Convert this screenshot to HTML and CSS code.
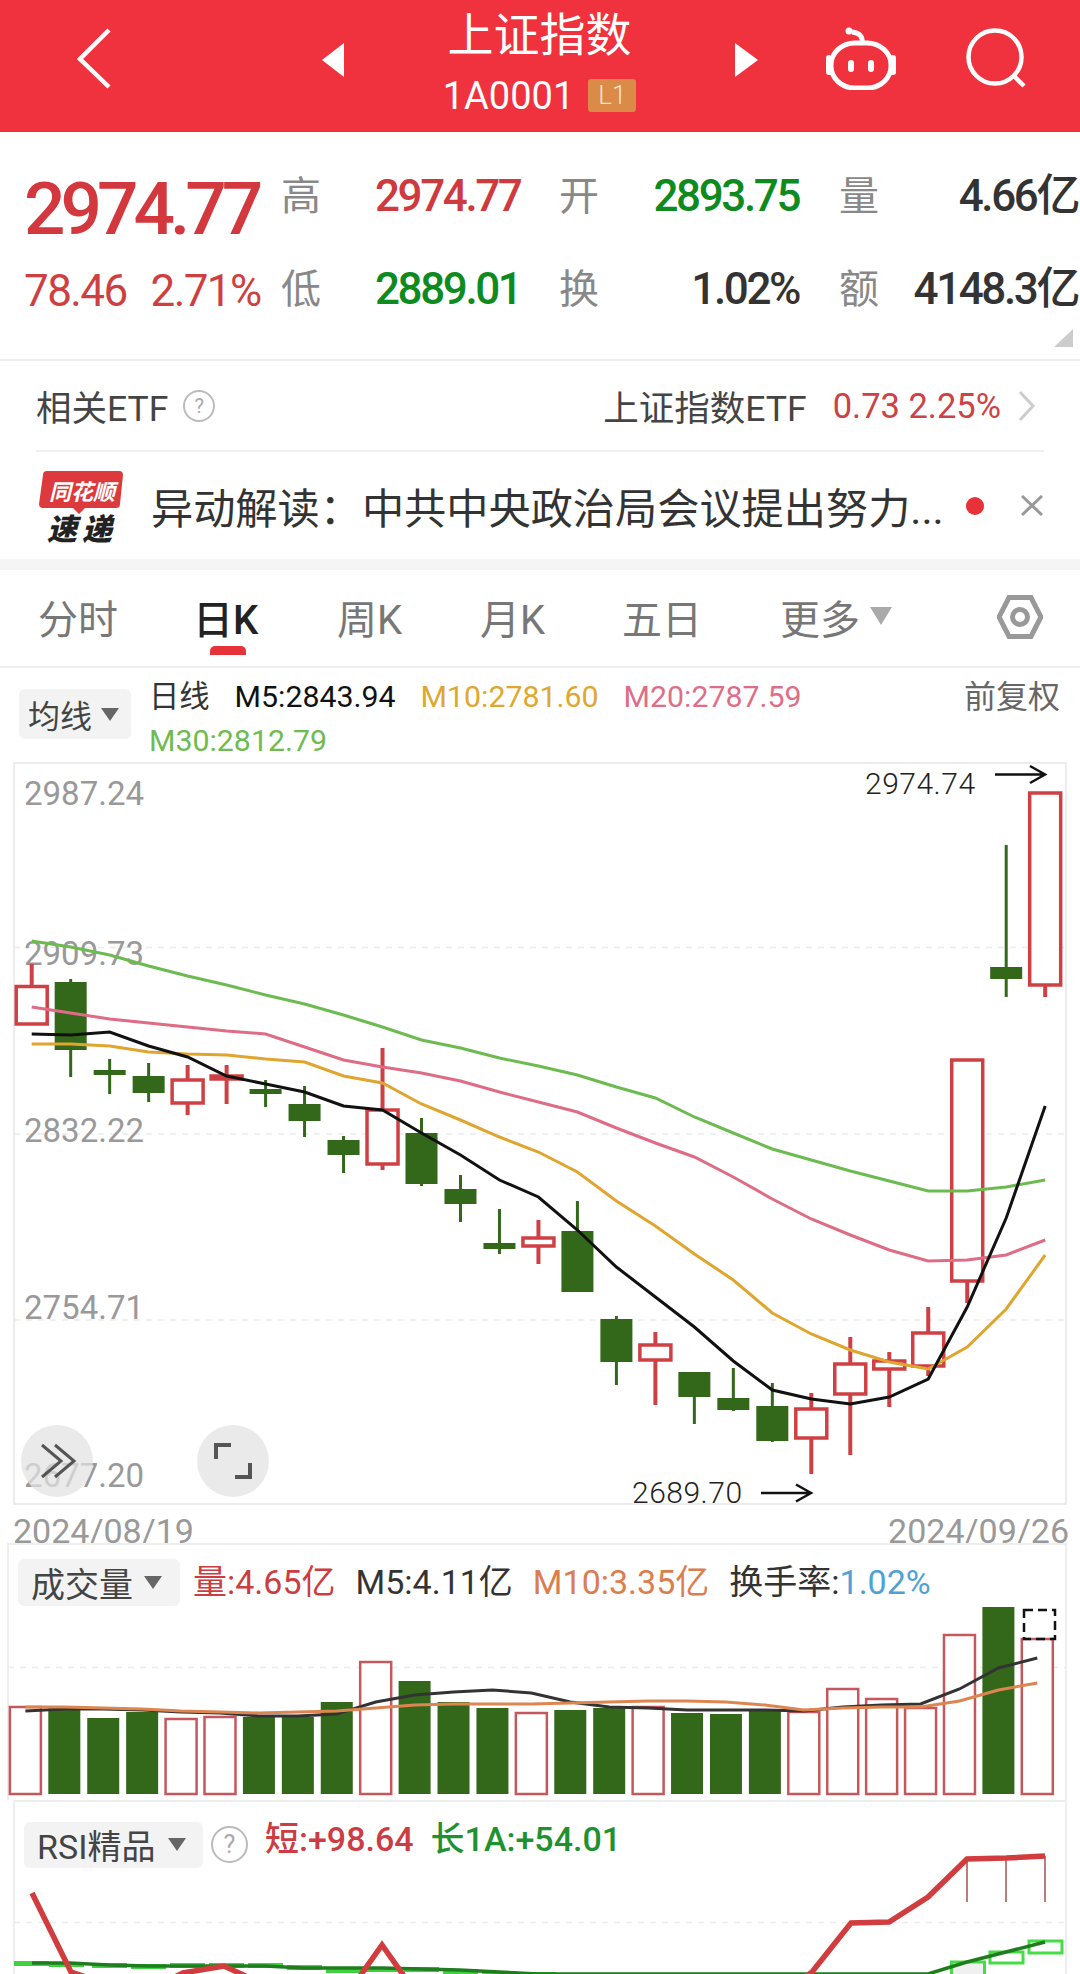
FILE: index.html
```html
<!DOCTYPE html>
<html lang="zh-CN">
<head>
    <meta charset="UTF-8">
    <meta name="viewport" content="width=device-width, initial-scale=1.0">
    <title>上证指数</title>
    <link rel="stylesheet" href="styles.css">
</head>
<body>
    <header class="topbar">
        <svg class="icon-back" viewBox="0 0 36 61"><path d="M33 2 L4 31 L33 59"/></svg>
        <span class="tri tri-left"></span>
        <div class="topbar-title">
            <h1 class="stock-name">上证指数</h1>
            <div class="stock-code">1A0001<span class="level-badge">L1</span></div>
        </div>
        <span class="tri tri-right"></span>
        <svg class="icon-robot" viewBox="826 27 70 63">
            <path d="M862 43 C863 37 860 33 852 32"/>
            <circle cx="849" cy="31" r="3.5" class="solid"/>
            <rect x="831" y="43" width="60" height="45" rx="24" ry="22"/>
            <path d="M829 58 V72 M893 58 V72" class="ears"/>
            <rect x="848" y="60" width="6" height="12" rx="3" class="solid"/>
            <rect x="868" y="60" width="6" height="12" rx="3" class="solid"/>
        </svg>
        <svg class="icon-search" viewBox="966 29 60 60">
            <circle cx="995" cy="58" r="26.5"/>
            <path d="M1015 78 L1024 87"/>
        </svg>
    </header>

    <section class="quote">
        <div class="price-big">2974.77</div>
        <div class="q-label q-c2">高</div>
        <div class="q-val up q-c3">2974.77</div>
        <div class="q-label q-c4">开</div>
        <div class="q-val down q-c5 q-right">2893.75</div>
        <div class="q-label q-c7">量</div>
        <div class="q-val flat q-c8 q-right">4.66亿</div>

        <div class="price-change"><span>78.46</span><span>2.71%</span></div>
        <div class="q-label q-c2">低</div>
        <div class="q-val down q-c3">2889.01</div>
        <div class="q-label q-c4">换</div>
        <div class="q-val flat q-c5 q-right">1.02%</div>
        <div class="q-label q-c7">额</div>
        <div class="q-val flat q-c8 q-right">4148.3亿</div>
        <span class="corner"></span>
    </section>

    <section class="etf-row">
        <div class="etf-left">相关ETF<span class="help help-small">?</span></div>
        <div class="etf-right">上证指数ETF<span class="etf-num">0.73 2.25%</span>
            <svg class="icon-more" viewBox="0 0 18 30"><path d="M2 1 L15 15 L2 29"/></svg>
        </div>
    </section>

    <section class="news-row">
        <svg class="news-logo" viewBox="36 466 92 76">
            <path class="bubble" d="M47 469 H119 Q123 469 123 473 L120 502 Q120 506 116 506 H85 L79 512 L73 506 H43 Q39 506 39 502 L43 473 Q43 469 47 469 Z"/>
            <text class="logo-top" x="49" y="498">同花顺</text>
            <text class="logo-bottom" x="47" y="538">速递</text>
        </svg>
        <div class="news-text">异动解读：中共中央政治局会议提出努力...</div>
        <span class="news-dot"></span>
        <svg class="icon-close" viewBox="0 0 22 21"><path d="M1 1 L21 20 M21 1 L1 20"/></svg>
    </section>

    <div class="gap-band"></div>

    <nav class="tabs">
        <span class="tab">分时</span>
        <span class="tab tab-active">日K</span>
        <span class="tab">周K</span>
        <span class="tab">月K</span>
        <span class="tab">五日</span>
        <span class="tab">更多<i class="caret caret-more"></i></span>
        <svg class="icon-hex" viewBox="997 597 46 44">
            <path d="M1009 599.5 H1031 L1041 619 L1031 638.5 H1009 L999 619 Z"/>
            <circle cx="1020" cy="619" r="7.5"/>
        </svg>
    </nav>

    <section class="legend">
        <div class="select select-ma">均线<i class="caret"></i></div>
        <div class="legend-lines">
            <div class="legend-line">
                <span class="c-dark">日线</span>
                <span class="c-black">M5:2843.94</span>
                <span class="c-m10">M10:2781.60</span>
                <span class="c-m20">M20:2787.59</span>
            </div>
            <div class="legend-line"><span class="c-m30">M30:2812.79</span></div>
        </div>
        <div class="adjust">前复权</div>
    </section>

    <section class="kline">
        <svg class="chart-svg" viewBox="13 762 1054 743">
            <g class="grid">
                <path d="M14 947.5 H1066 M14 1134 H1066 M14 1320 H1066"/>
            </g>
            <text class="axis" x="24" y="805">2987.24</text>
            <text class="axis" x="24" y="965">2909.73</text>
            <text class="axis" x="24" y="1142">2832.22</text>
            <text class="axis" x="24" y="1319">2754.71</text>
            <text class="axis" x="24" y="1487">2677.20</text>
            <g id="candles"></g>
            <g id="ma-lines"></g>
            <text class="extreme" x="865" y="794">2974.74</text>
            <path class="arrow" d="M995 774.5 H1045 M1030 766 L1045 774.5 L1030 783"/>
            <text class="extreme" x="632" y="1503">2689.70</text>
            <path class="arrow" d="M761 1493 H811 M796 1484.5 L811 1493 L796 1501.5"/>
            <circle class="float-btn" cx="57" cy="1461" r="36"/>
            <path class="float-icon" d="M42 1445 L61 1461 L42 1477 M55 1445 L74 1461 L55 1477"/>
            <circle class="float-btn" cx="233" cy="1461" r="36"/>
            <path class="float-icon thick" d="M216 1459 V1445 H231 M250 1463 V1477 H235"/>
        </svg>
    </section>

    <div class="dates"><span>2024/08/19</span><span>2024/09/26</span></div>

    <section class="panel panel-vol">
        <svg class="chart-svg" viewBox="7 1543 1060 257">
            <path class="grid" d="M8 1667.5 H1066"/>
            <g id="vol-bars"></g>
            <g id="vol-lines"></g>
        </svg>
        <div class="panel-head">
            <div class="select select-vol">成交量<i class="caret"></i></div>
            <span class="c-red">量:4.65亿</span>
            <span class="c-dark">M5:4.11亿</span>
            <span class="c-orange">M10:3.35亿</span>
            <span class="c-dark">换手率:<b class="c-blue">1.02%</b></span>
        </div>
    </section>

    <section class="panel panel-rsi">
        <svg class="chart-svg" viewBox="13 1800 1054 174">
            <path class="grid" d="M14 1922.5 H1066"/>
            <g id="rsi"></g>
        </svg>
        <div class="panel-head">
            <div class="select select-rsi">RSI精品<i class="caret"></i></div>
            <span class="help help-big">?</span>
            <span class="c-red strong">短:+98.64</span>
            <span class="c-green strong">长1A:+54.01</span>
        </div>
    </section>

    <script src="chart.js"></script>
</body>
</html>
```

FILE: styles.css
```css
* {
    box-sizing: border-box;
}

html, body {
    margin: 0;
    padding: 0;
}

body {
    width: 1080px;
    height: 1974px;
    overflow: hidden;
    background-color: white;
    font-family: Roboto, "Noto Sans CJK SC", sans-serif;
    color: #333;
}

/* top red bar */
.topbar {
    display: flex;
    align-items: center;
    height: 132px;
    padding: 0 0 16px 76px;
    background-color: #ef323d;
    color: white;
}

.icon-back {
    width: 36px;
    height: 61px;
    fill: none;
    stroke: #fff;
    stroke-width: 4.5;
}

.tri {
    width: 0;
    height: 0;
    margin-top: 4px;
    border-top: 17px solid transparent;
    border-bottom: 17px solid transparent;
}

.tri-left {
    margin-left: 210px;
    border-right: 22px solid white;
}

.tri-right {
    border-left: 23px solid white;
}

.topbar-title {
    width: 391px;
    padding-top: 9px;
    text-align: center;
}

.stock-name {
    margin: 0;
    font-size: 46px;
    line-height: 50px;
    font-weight: 400;
}

.stock-code {
    margin-top: 16px;
    display: flex;
    justify-content: center;
    align-items: center;
    font-size: 38px;
    line-height: 40px;
}

.level-badge {
    width: 48px;
    height: 33px;
    margin-left: 14px;
    border-radius: 3px;
    background-color: #dc8a48;
    color: #f8e4cf;
    font-size: 26px;
    line-height: 33px;
    font-weight: 300;
}

.icon-robot {
    width: 70px;
    height: 63px;
    margin-left: 68px;
    fill: none;
    stroke: #fff;
    stroke-width: 5;
}

.icon-robot .solid {
    fill: #fff;
    stroke: none;
}

.icon-robot .ears {
    stroke-width: 6;
    stroke-linecap: round;
}

.icon-search {
    width: 60px;
    height: 60px;
    margin-left: 70px;
    fill: none;
    stroke: #fff;
    stroke-width: 4.5;
}

/* quote block */
.quote {
    position: relative;
    display: grid;
    grid-template-columns: 257px 94px 184px 40px 200px 40px 40px 199px;
    grid-template-rows: 93px 93px;
    height: 229px;
    padding: 18px 0 0 24px;
    border-bottom: 2px solid #eee;
}

.price-big {
    margin-top: 19px;
    font-size: 73px;
    line-height: 80px;
    font-weight: 500;
    letter-spacing: -5px;
    color: #d2383e;
}

.price-change {
    display: flex;
    gap: 24px;
    margin-top: 2px;
    font-size: 44px;
    line-height: 93px;
    letter-spacing: -1.6px;
    color: #cf3f42;
}

.q-label {
    font-size: 40px;
    line-height: 93px;
    color: #888;
}

.q-val {
    font-size: 44px;
    line-height: 93px;
    font-weight: 500;
    letter-spacing: -2.4px;
}

.q-right {
    text-align: right;
}

.q-c2 { grid-column: 2; }
.q-c3 { grid-column: 3; }
.q-c4 { grid-column: 4; }
.q-c5 { grid-column: 5; }
.q-c7 { grid-column: 7; }
.q-c8 { grid-column: 8; }

.up { color: #cf3a3f; }
.down { color: #0e8a1e; }
.flat { color: #333; }

.corner {
    position: absolute;
    right: 7px;
    top: 197px;
    border-left: 19px solid transparent;
    border-bottom: 18px solid #ccc;
}

/* related etf */
.etf-row {
    display: flex;
    justify-content: space-between;
    align-items: center;
    height: 91px;
    margin: 0 36px;
    border-bottom: 2px solid #f0f0f0;
    font-size: 35.5px;
    color: #444;
}

.etf-left, .etf-right {
    display: flex;
    align-items: center;
}

.help {
    display: inline-block;
    border: 2px solid #bbb;
    border-radius: 50%;
    color: #aaa;
    text-align: center;
}

.help-small {
    width: 32px;
    height: 32px;
    margin-left: 15px;
    font-size: 20px;
    line-height: 28px;
}

.etf-num {
    margin-left: 26px;
    font-size: 34.5px;
    color: #cc4246;
}

.icon-more {
    width: 18px;
    height: 30px;
    margin-left: 17px;
    margin-right: 8px;
    fill: none;
    stroke: #ccc;
    stroke-width: 3;
}

/* news line */
.news-row {
    display: flex;
    align-items: center;
    height: 107px;
    padding: 0 0 0 36px;
}

.news-logo {
    width: 92px;
    height: 76px;
    overflow: visible;
}

.bubble {
    fill: #dd3a3e;
}

.logo-top {
    font-size: 22px;
    font-weight: 700;
    font-style: italic;
    fill: white;
}

.logo-bottom {
    font-size: 30px;
    font-weight: 900;
    font-style: italic;
    letter-spacing: 5px;
    fill: #222;
}

.news-text {
    width: 800px;
    margin-left: 23px;
    font-size: 42.2px;
    color: #333;
    white-space: nowrap;
}

.news-dot {
    width: 18px;
    height: 18px;
    margin-left: 15px;
    border-radius: 50%;
    background-color: #e8323a;
}

.icon-close {
    width: 22px;
    height: 21px;
    margin-left: 37px;
    fill: none;
    stroke: #999;
    stroke-width: 3;
}

.gap-band {
    height: 11px;
    background-color: #f5f5f5;
}

/* period tabs */
.tabs {
    position: relative;
    display: grid;
    grid-template-columns: 160px 139px 143px 142px 158px 217px 46px;
    align-items: center;
    height: 98px;
    padding: 0 0 3px 38px;
    border-bottom: 2px solid #eee;
    font-size: 40px;
    color: #777;
}

.tab {
    display: flex;
    align-items: center;
    white-space: nowrap;
}

.tab-active {
    position: relative;
    margin-left: -5px;
    color: #222;
    font-weight: 500;
}

.tab-active::after {
    content: "";
    position: absolute;
    left: 17px;
    top: 58px;
    width: 36px;
    height: 9px;
    border-radius: 5px 5px 0 0;
    background-color: #e8323a;
}

.caret {
    display: inline-block;
    width: 0;
    height: 0;
    border-left: 9px solid transparent;
    border-right: 9px solid transparent;
    border-top: 13px solid #666;
}

.caret-more {
    margin-left: 10px;
    margin-top: -2px;
    border-left-width: 11px;
    border-right-width: 11px;
    border-top: 18px solid #aaa;
}

.icon-hex {
    width: 46px;
    height: 44px;
    fill: none;
    stroke: #999;
    stroke-width: 5;
}

/* ma legend */
.legend {
    display: flex;
    height: 94px;
    padding: 21px 20px 0 19px;
    font-size: 30.3px;
}

.select {
    display: flex;
    align-items: center;
    border-radius: 6px;
    background-color: #f3f3f3;
    color: #444;
}

.select-ma {
    width: 112px;
    height: 50px;
    padding-left: 9px;
    font-size: 32px;
}

.select-ma .caret {
    margin-left: 9px;
}

.legend-lines {
    margin-left: 18px;
    margin-top: -21px;
    flex: 1;
}

.legend-line {
    display: flex;
    gap: 25px;
    height: 44px;
    line-height: 58px;
}

.adjust {
    margin-top: -21px;
    font-size: 32px;
    line-height: 58px;
    color: #666;
}

.c-dark { color: #333; }
.c-black { color: #111; }
.c-m10 { color: #dfa72f; }
.c-m20 { color: #de6e88; }
.c-m30 { color: #6fbb50; }
.c-red { color: #cc3c42; }
.c-orange { color: #dc7d50; }
.c-blue { color: #4ea2d4; font-weight: 400; }
.c-green { color: #1f9130; }

/* charts */
.kline {
    position: relative;
    height: 743px;
    margin: 0 13px;
    border: 2px solid #ececec;
}

.chart-svg {
    position: absolute;
    left: -2px;
    top: -2px;
    overflow: visible;
}

.kline .chart-svg {
    width: 1054px;
    height: 743px;
}

.grid {
    fill: none;
    stroke: #ececec;
    stroke-width: 1.5;
    stroke-dasharray: 6 6;
}

.axis {
    font-size: 33px;
    fill: #999;
}

.extreme {
    font-size: 30px;
    font-weight: 300;
    letter-spacing: 0.5px;
    fill: #222;
}

.arrow {
    fill: none;
    stroke: #111;
    stroke-width: 2.5;
}

.float-btn {
    fill: rgba(226, 226, 226, 0.72);
}

.float-icon {
    fill: none;
    stroke: #555;
    stroke-width: 3;
}

.float-icon.thick {
    stroke-width: 4;
}

.dates {
    display: flex;
    justify-content: space-between;
    height: 38px;
    margin: 0 11px 0 13px;
    padding-top: 13px;
    font-size: 34px;
    line-height: 26px;
    color: #999;
}

.panel {
    position: relative;
    border: 2px solid #eee;
    border-bottom: none;
}

.panel-vol {
    height: 257px;
    margin: 0 13px 0 7px;
}

.panel-vol .chart-svg {
    width: 1060px;
    height: 257px;
}

.panel-rsi {
    height: 174px;
    margin: 0 13px;
}

.panel-rsi .chart-svg {
    width: 1054px;
    height: 174px;
}

.panel-head {
    position: relative;
    display: flex;
    align-items: center;
    gap: 20px;
    font-size: 34px;
    color: #333;
}

.panel-vol .panel-head {
    padding: 10px 0 0 9px;
}

.panel-vol .panel-head > span {
    margin-bottom: 5px;
}

.panel-vol .c-red {
    margin-left: -7px;
}

.panel-rsi .panel-head {
    padding: 10px 0 0 9px;
}

.select-vol {
    width: 162px;
    height: 47px;
    padding-left: 13px;
}

.select-rsi {
    width: 179px;
    height: 46px;
    padding-left: 13px;
}

.select-vol .caret, .select-rsi .caret {
    margin-left: 11px;
}

.select-rsi .caret {
    margin-left: 13px;
}

.help-big {
    width: 37px;
    height: 37px;
    margin-left: -12px;
    font-size: 25px;
    line-height: 33px;
}

.strong {
    font-weight: 500;
    margin-bottom: 16px;
}

.panel-head b {
    font-weight: 400;
}

.panel-rsi .c-red {
    margin-left: -3px;
}

.panel-rsi .c-green {
    margin-left: -3px;
}
```

FILE: chart.js
```js
// all coordinates are page pixels, the svg viewBoxes are set to match
const UP = "#cf4044";
const DOWN = "#33681a";

// up?, wick top, wick bottom, body top, body bottom
const candles = [
    [1, 964, 1024, 986.5, 1024], [0, 979, 1077, 982, 1050], [0, 1059, 1094, 1070, 1075],
    [0, 1063, 1102, 1076, 1093], [1, 1065, 1115, 1080, 1103], [1, 1065, 1104, 1076, 1079],
    [0, 1080, 1107, 1089, 1094], [0, 1086, 1137, 1104, 1121], [0, 1136, 1173, 1140, 1155],
    [1, 1048, 1170, 1110, 1164], [0, 1118, 1186, 1133, 1184], [0, 1175, 1222, 1189, 1204],
    [0, 1209, 1254, 1243, 1249], [1, 1220, 1264, 1238, 1246], [0, 1201, 1292, 1231, 1292],
    [0, 1316, 1385, 1319, 1362], [1, 1332, 1405, 1345, 1360], [0, 1372, 1424, 1372, 1397],
    [0, 1368, 1411, 1398, 1410], [0, 1383, 1442, 1406, 1441], [1, 1393, 1474, 1409, 1438],
    [1, 1337, 1455, 1364, 1394], [1, 1352, 1407, 1361, 1369], [1, 1307, 1376, 1333, 1366],
    [1, 1060, 1303, 1060, 1281], [0, 845, 997, 967, 979], [1, 793, 997, 793, 985]
];

const maLines = [
    { color: "#6dbb50", ys: [941, 947, 955, 966, 976, 985, 995, 1004, 1015, 1027, 1040, 1048, 1058, 1066, 1075, 1087, 1098, 1117, 1133, 1149, 1160, 1171, 1181, 1191, 1191, 1187, 1180] },
    { color: "#de6c85", ys: [1007, 1013, 1019, 1023, 1027, 1031, 1034, 1047, 1060, 1067, 1073, 1081, 1092, 1102, 1112, 1128, 1143, 1157, 1177, 1199, 1219, 1235, 1250, 1261, 1260, 1255, 1240] },
    { color: "#e0a52e", ys: [1044, 1044, 1046, 1052, 1054, 1055, 1059, 1062, 1076, 1083, 1104, 1120, 1137, 1152, 1172, 1201, 1226, 1254, 1280, 1313, 1334, 1350, 1362, 1369, 1347, 1309, 1255] },
    { color: "#111111", ys: [1034, 1035, 1032, 1046, 1057, 1076, 1084, 1092, 1106, 1110, 1133, 1155, 1180, 1197, 1230, 1267, 1297, 1327, 1361, 1390, 1399, 1404, 1397, 1379, 1307, 1218, 1106] }
];

// up?, bar top
const volBars = [
    [1, 1707], [0, 1707], [0, 1718], [0, 1712], [1, 1719], [1, 1717], [0, 1717], [0, 1717], [0, 1702],
    [1, 1662], [0, 1681], [0, 1702], [0, 1708], [1, 1713], [0, 1710], [0, 1708], [1, 1707], [0, 1713],
    [0, 1714], [0, 1711], [1, 1712], [1, 1689], [1, 1699], [1, 1708], [1, 1635], [0, 1607], [1, 1639]
];

const volM5 = [1711, 1709, 1709, 1710, 1712, 1713, 1716, 1716, 1714, 1702, 1695, 1692, 1690, 1693, 1702, 1707, 1708, 1710, 1710, 1710, 1711, 1707, 1705, 1704, 1689, 1668, 1658];
const volM10 = [1707, 1707, 1708, 1709, 1711, 1712, 1713, 1712, 1711, 1708, 1705, 1704, 1704, 1704, 1703, 1702, 1701, 1701, 1702, 1705, 1710, 1708, 1707, 1707, 1701, 1690, 1683];

const rsiRed = [[32, 1893], [71, 1972], [110, 1985], [148, 1990], [183, 1973], [224, 1966], [265, 1985], [304, 2000], [343, 2000], [382, 1945], [421, 2000], [772, 2000], [812, 1972], [851, 1923], [889, 1922], [928, 1897], [967, 1859], [1006, 1858], [1045, 1856]];
const rsiDark = [[32, 1963], [70, 1963], [109, 1965], [148, 1966], [187, 1966], [226, 1966], [265, 1966], [304, 1968], [343, 1968], [382, 1968], [421, 1969], [460, 1970], [499, 1972], [538, 1974], [928, 1974], [967, 1962], [1006, 1952], [1045, 1942]];
// left, top of the flat bright histogram blocks
const rsiBlocks = [[14, 1961], [49, 1962], [92, 1963], [131, 1964], [170, 1963], [209, 1963], [248, 1963], [287, 1965], [326, 1968], [365, 1967], [404, 1967], [443, 1969], [482, 1971], [521, 1972]];

function pts(list) {
    return list.map(p => p.join(",")).join(" ");
}

function drawCandles() {
    let out = "";
    candles.forEach((c, i) => {
        const x = 31.7 + 38.98 * i;
        const color = c[0] ? UP : DOWN;
        out += `<line x1="${x}" x2="${x}" y1="${c[1]}" y2="${c[2]}" stroke="${color}" stroke-width="${c[0] ? 4 : 3}"/>`;
        if (c[0]) {
            out += `<rect x="${x - 15.5}" y="${c[3]}" width="31" height="${c[4] - c[3]}" fill="#fff" stroke="${color}" stroke-width="3.5"/>`;
        } else {
            out += `<rect x="${x - 16}" y="${c[3]}" width="32" height="${c[4] - c[3]}" fill="${color}"/>`;
        }
    });
    document.getElementById("candles").innerHTML = out;

    document.getElementById("ma-lines").innerHTML = maLines.map(line => {
        const points = line.ys.map((y, i) => [(31.7 + 38.98 * i).toFixed(1), y]);
        return `<polyline points="${pts(points)}" fill="none" stroke="${line.color}" stroke-width="3"/>`;
    }).join("");
}

function drawVolume() {
    const bottom = 1794;
    const barX = i => 25.4 + 38.92 * i;
    let out = "";
    volBars.forEach((b, i) => {
        const x = barX(i);
        if (b[0]) {
            out += `<rect x="${x - 15.5}" y="${b[1]}" width="31" height="${bottom - b[1]}" fill="#fff" stroke="#c4585c" stroke-width="2.5"/>`;
        } else {
            out += `<rect x="${x - 16}" y="${b[1]}" width="32" height="${bottom - b[1]}" fill="#33681a"/>`;
        }
    });
    // today's projected volume
    out += `<rect x="1024" y="1610" width="31" height="29" fill="none" stroke="#111" stroke-width="2.5" stroke-dasharray="9 5"/>`;
    document.getElementById("vol-bars").innerHTML = out;

    const line = (ys, color) => {
        const points = ys.map((y, i) => [barX(i).toFixed(1), y]);
        return `<polyline points="${pts(points)}" fill="none" stroke="${color}" stroke-width="3"/>`;
    };
    document.getElementById("vol-lines").innerHTML = line(volM5, "#333") + line(volM10, "#dd8550");
}

function drawRsi() {
    let out = "";
    rsiBlocks.forEach(b => {
        out += `<rect x="${b[0]}" y="${b[1]}" width="35" height="5" fill="#3fd43f"/>`;
    });
    [[951.5, 1962, 33, 14, "#f0f0f0"], [990, 1952, 33, 11, "#fff"], [1029, 1941, 33, 12, "#fff"]].forEach(b => {
        out += `<rect x="${b[0]}" y="${b[1]}" width="${b[2]}" height="${b[3]}" fill="${b[4]}" stroke="#45dc45" stroke-width="3"/>`;
    });
    out += `<polyline points="${pts(rsiDark)}" fill="none" stroke="#1f7d1f" stroke-width="3.5"/>`;
    out += `<path d="M967 1859 V1902 M1006 1858 V1902 M1045 1856 V1902" stroke="#a85050" stroke-width="1.5"/>`;
    out += `<polyline points="${pts(rsiRed)}" fill="none" stroke="#d13c3e" stroke-width="5.5"/>`;
    document.getElementById("rsi").innerHTML = out;
}

drawCandles();
drawVolume();
drawRsi();
```
